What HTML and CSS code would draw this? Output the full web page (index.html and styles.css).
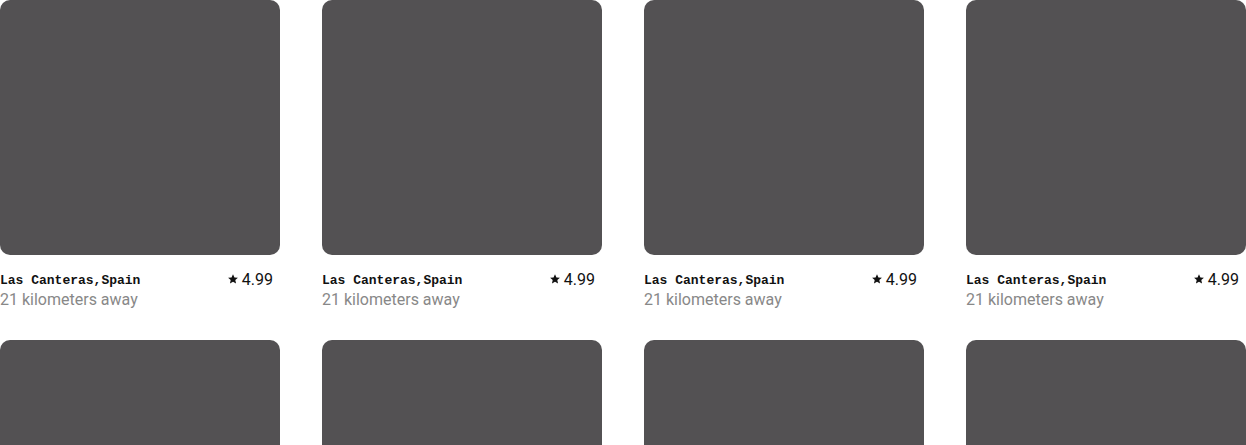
FILE: index.html
```html
<!DOCTYPE html>
<html lang="en">
<head>
<meta charset="utf-8">
<title>Listings</title>
<link rel="stylesheet" href="styles.css">
</head>
<body>
<div class="grid">
  <div class="card"><div class="photo"></div><div class="info"><div class="row"><span class="place">Las Canteras,Spain</span><span class="rating"><svg class="star" viewBox="0 0 24 24"><path d="M12 2.5l2.9 6.3 6.9.7-5.2 4.6 1.5 6.8L12 17.4l-6.1 3.5 1.5-6.8-5.2-4.6 6.9-.7z"/></svg>4.99</span></div><div class="dist">21 kilometers away</div></div></div>
  <div class="card"><div class="photo"></div><div class="info"><div class="row"><span class="place">Las Canteras,Spain</span><span class="rating"><svg class="star" viewBox="0 0 24 24"><path d="M12 2.5l2.9 6.3 6.9.7-5.2 4.6 1.5 6.8L12 17.4l-6.1 3.5 1.5-6.8-5.2-4.6 6.9-.7z"/></svg>4.99</span></div><div class="dist">21 kilometers away</div></div></div>
  <div class="card"><div class="photo"></div><div class="info"><div class="row"><span class="place">Las Canteras,Spain</span><span class="rating"><svg class="star" viewBox="0 0 24 24"><path d="M12 2.5l2.9 6.3 6.9.7-5.2 4.6 1.5 6.8L12 17.4l-6.1 3.5 1.5-6.8-5.2-4.6 6.9-.7z"/></svg>4.99</span></div><div class="dist">21 kilometers away</div></div></div>
  <div class="card"><div class="photo"></div><div class="info"><div class="row"><span class="place">Las Canteras,Spain</span><span class="rating"><svg class="star" viewBox="0 0 24 24"><path d="M12 2.5l2.9 6.3 6.9.7-5.2 4.6 1.5 6.8L12 17.4l-6.1 3.5 1.5-6.8-5.2-4.6 6.9-.7z"/></svg>4.99</span></div><div class="dist">21 kilometers away</div></div></div>
  <div class="card"><div class="photo"></div><div class="info"><div class="row"><span class="place">Las Canteras,Spain</span><span class="rating"><svg class="star" viewBox="0 0 24 24"><path d="M12 2.5l2.9 6.3 6.9.7-5.2 4.6 1.5 6.8L12 17.4l-6.1 3.5 1.5-6.8-5.2-4.6 6.9-.7z"/></svg>4.99</span></div><div class="dist">21 kilometers away</div></div></div>
  <div class="card"><div class="photo"></div><div class="info"><div class="row"><span class="place">Las Canteras,Spain</span><span class="rating"><svg class="star" viewBox="0 0 24 24"><path d="M12 2.5l2.9 6.3 6.9.7-5.2 4.6 1.5 6.8L12 17.4l-6.1 3.5 1.5-6.8-5.2-4.6 6.9-.7z"/></svg>4.99</span></div><div class="dist">21 kilometers away</div></div></div>
  <div class="card"><div class="photo"></div><div class="info"><div class="row"><span class="place">Las Canteras,Spain</span><span class="rating"><svg class="star" viewBox="0 0 24 24"><path d="M12 2.5l2.9 6.3 6.9.7-5.2 4.6 1.5 6.8L12 17.4l-6.1 3.5 1.5-6.8-5.2-4.6 6.9-.7z"/></svg>4.99</span></div><div class="dist">21 kilometers away</div></div></div>
  <div class="card"><div class="photo"></div><div class="info"><div class="row"><span class="place">Las Canteras,Spain</span><span class="rating"><svg class="star" viewBox="0 0 24 24"><path d="M12 2.5l2.9 6.3 6.9.7-5.2 4.6 1.5 6.8L12 17.4l-6.1 3.5 1.5-6.8-5.2-4.6 6.9-.7z"/></svg>4.99</span></div><div class="dist">21 kilometers away</div></div></div>
</div>
</body>
</html>
```

FILE: styles.css
```css
html, body {
  margin: 0;
  padding: 0;
  background: #ffffff;
}
body {
  font-family: Roboto, "Liberation Sans", sans-serif;
}
.grid {
  display: grid;
  grid-template-columns: repeat(4, 280px);
  column-gap: 42px;
  row-gap: 30px;
}
.photo {
  height: 255px;
  border-radius: 10px;
  background: #535153;
}
.info {
  margin-top: 14px;
}
.row {
  display: flex;
  justify-content: space-between;
  align-items: center;
  height: 20px;
  padding-right: 7px;
}
.place {
  font-family: "Liberation Mono", "DejaVu Sans Mono", monospace;
  font-weight: 700;
  font-size: 13px;
  color: #111;
  padding-top: 2px;
}
.rating {
  display: flex;
  align-items: center;
  gap: 3px;
  font-size: 16px;
  color: #111;
}
.star {
  width: 12px;
  height: 12px;
  fill: #111;
}
.dist {
  font-size: 16px;
  line-height: 21px;
  color: #888888;
}
```
